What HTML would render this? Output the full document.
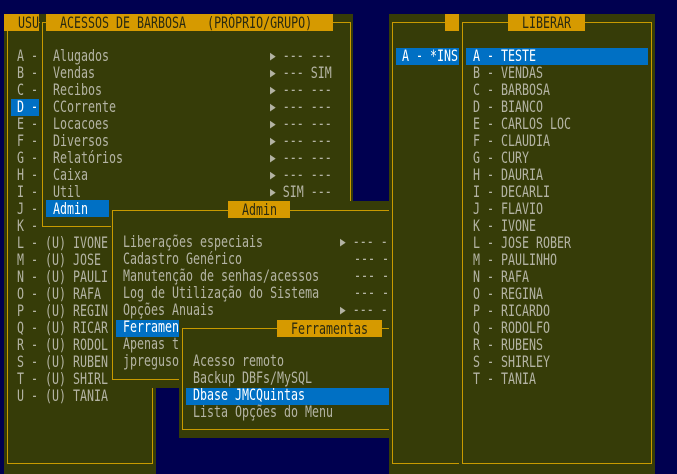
<!DOCTYPE html>
<html><head><meta charset="utf-8"><style>
*{margin:0;padding:0;box-sizing:border-box}
body{width:677px;height:465px;background:#000050;position:relative;overflow:hidden;font-family:"DejaVu Sans Mono","Liberation Mono",monospace;font-size:16px;color:#b4b4a4}
.p{position:absolute;background:#363c08}
.b{position:absolute;border:1px solid #c89a00}
.tt{position:absolute;background:#d69a00;color:#2a2a10;height:17px;line-height:17px;white-space:pre;overflow:hidden}
.tt span,.t{display:block;transform:scaleX(0.727);transform-origin:0 0}
.t{position:absolute;white-space:pre;line-height:17px;margin-top:-1px}
.h{position:absolute;background:#0070c4;height:17px}
.w{color:#ffffff}
.a{font-size:13px;line-height:10px;display:inline-block;vertical-align:1px;color:#b4b4a4}
</style></head><body>
<!-- left USU panel -->
<div class="p" style="left:4px;top:14px;width:152px;height:460px"></div>
<div class="b" style="left:7px;top:22px;width:146px;height:442px"></div>
<div class="tt" style="left:4px;top:14px;width:35px;padding-left:14px"><span>USU</span></div>
<div class="h" style="left:11px;top:99px;width:28px"></div>
<div class="t" style="left:17px;top:48px">A -
B -
C -
<span class="w">D -</span>
E -
F -
G -
H -
I -
J -
K -
L - (U) IVONE
M - (U) JOSE
N - (U) PAULI
O - (U) RAFA
P - (U) REGIN
Q - (U) RICAR
R - (U) RODOL
S - (U) RUBEN
T - (U) SHIRL
U - (U) TANIA</div>

<!-- ACESSOS panel -->
<div class="p" style="left:40px;top:14px;width:313px;height:217px"></div>
<div class="b" style="left:42px;top:22px;width:309px;height:205px"></div>
<div class="tt" style="left:46px;top:14px;width:287px;padding-left:14px"><span>ACESSOS DE BARBOSA   (PRÓPRIO/GRUPO)</span></div>
<div class="h" style="left:46px;top:200px;width:63px"></div>
<div class="t" style="left:53px;top:48px">Alugados
Vendas
Recibos
CCorrente
Locacoes
Diversos
Relatórios
Caixa
Util
<span class="w">Admin</span></div>
<div class="t" style="left:270px;top:48px"><span class="a">▶</span> --- ---
<span class="a">▶</span> --- SIM
<span class="a">▶</span> --- ---
<span class="a">▶</span> --- ---
<span class="a">▶</span> --- ---
<span class="a">▶</span> --- ---
<span class="a">▶</span> --- ---
<span class="a">▶</span> --- ---
<span class="a">▶</span> SIM ---</div>

<!-- Admin panel -->
<div class="p" style="left:111px;top:201px;width:280px;height:187px"></div>
<div class="b" style="left:112px;top:210px;width:290px;height:170px"></div>
<div class="tt" style="left:228px;top:201px;width:62px;padding-left:14px"><span>Admin</span></div>
<div class="h" style="left:116px;top:320px;width:63px"></div>
<div class="t" style="left:123px;top:234px">Liberações especiais
Cadastro Genérico
Manutenção de senhas/acessos
Log de Utilização do Sistema
Opções Anuais
<span class="w">Ferramen</span>
Apenas t
jpreguso</div>
<div class="t" style="left:340px;top:234px"><span class="a">▶</span> --- -
  --- -
  --- -
  --- -
<span class="a">▶</span> --- -</div>

<!-- Ferramentas panel -->
<div class="p" style="left:179px;top:321px;width:211px;height:117px"></div>
<div class="b" style="left:182px;top:328px;width:220px;height:102px"></div>
<div class="tt" style="left:277px;top:320px;width:105px;padding-left:14px"><span>Ferramentas</span></div>
<div class="h" style="left:186px;top:388px;width:203px"></div>
<div class="t" style="left:193px;top:353px">Acesso remoto
Backup DBFs/MySQL
<span class="w">Dbase JMCQuintas</span>
Lista Opções do Menu</div>

<!-- middle panel -->
<div class="p" style="left:389px;top:14px;width:72px;height:460px"></div>
<div class="b" style="left:392px;top:22px;width:70px;height:442px"></div>
<div class="tt" style="left:445px;top:14px;width:14px"></div>
<div class="h" style="left:396px;top:48px;width:63px"></div>
<div class="t w" style="left:402px;top:48px">A - *INS</div>

<!-- right LIBERAR panel -->
<div class="p" style="left:459px;top:14px;width:196px;height:460px"></div>
<div class="b" style="left:462px;top:22px;width:190px;height:442px"></div>
<div class="tt" style="left:508px;top:14px;width:77px;padding-left:14px"><span>LIBERAR</span></div>
<div class="h" style="left:466px;top:48px;width:182px"></div>
<div class="t" style="left:473px;top:48px"><span class="w">A - TESTE</span>
B - VENDAS
C - BARBOSA
D - BIANCO
E - CARLOS LOC
F - CLAUDIA
G - CURY
H - DAURIA
I - DECARLI
J - FLAVIO
K - IVONE
L - JOSE ROBER
M - PAULINHO
N - RAFA
O - REGINA
P - RICARDO
Q - RODOLFO
R - RUBENS
S - SHIRLEY
T - TANIA</div>
</body></html>
